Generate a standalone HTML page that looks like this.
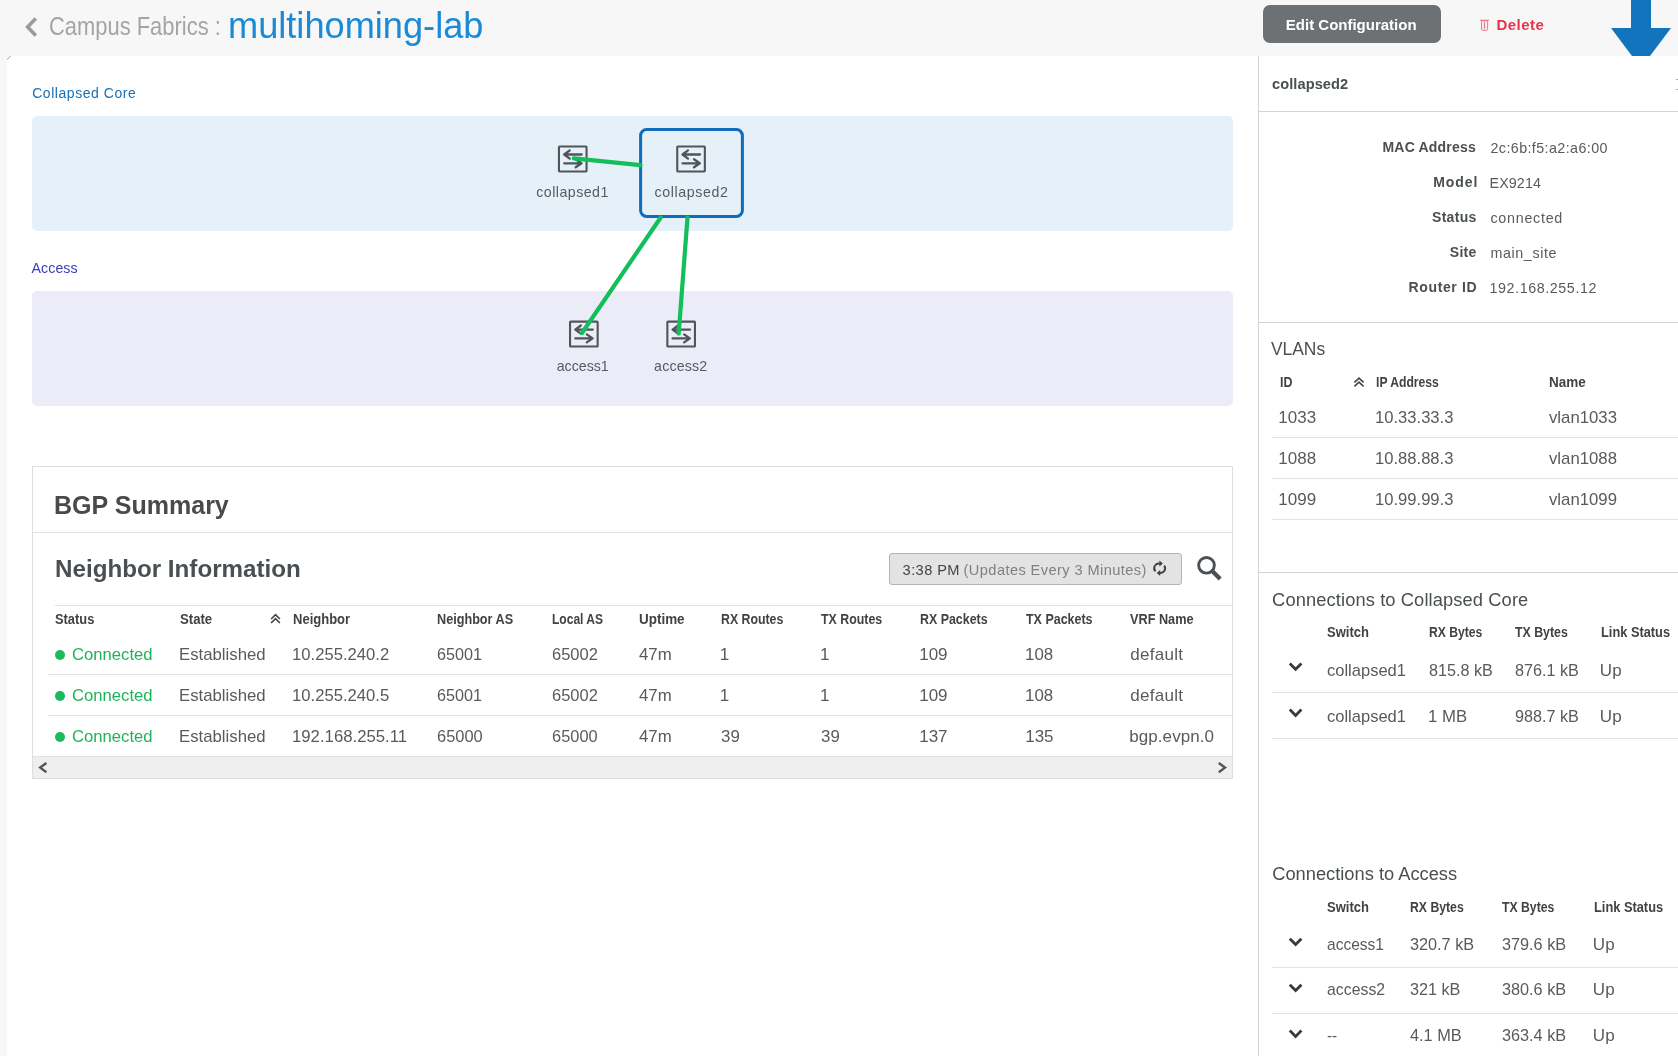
<!DOCTYPE html>
<html><head><meta charset="utf-8"><style>
html,body{margin:0;padding:0;}
body{width:1678px;height:1056px;overflow:hidden;background:#f7f7f7;position:relative;font-family:"Liberation Sans",sans-serif;}
.t{position:absolute;white-space:nowrap;line-height:1;transform-origin:0 0;}
.r{position:absolute;}
svg{position:absolute;overflow:visible;}
</style></head><body>
<!-- arrow (behind panel) -->
<svg style="left:0;top:0" width="1678" height="60"><polygon points="1631,0 1651,0 1651,28 1671,28 1641,68 1611,28 1631,28" fill="#1274bc"/></svg>
<!-- left panel -->
<div class="r" style="left:7px;top:56px;width:1251px;height:1000px;background:#fff;border-top-left-radius:4px;"></div>
<svg style="left:0;top:0" width="20" height="70"><path d="M7.5,59.8 A4,4 0 0 1 10.8,56.5" fill="none" stroke="#aaa" stroke-width="1"/></svg>
<!-- right panel -->
<div class="r" style="left:1258px;top:56px;width:420px;height:1000px;background:#fff;border-left:1px solid #d2d2d2;box-sizing:border-box;"></div>
<div class="r" style="left:1676px;top:79px;width:2px;height:1px;background:#aaa;"></div>
<div class="r" style="left:1676px;top:89px;width:2px;height:1px;background:#aaa;"></div>
<div class="r" style="left:1259px;top:111px;width:419px;height:1px;background:#d2d2d2;"></div>
<div class="r" style="left:1259px;top:322px;width:419px;height:1px;background:#d2d2d2;"></div>
<div class="r" style="left:1259px;top:572px;width:419px;height:1px;background:#d2d2d2;"></div>
<!-- header -->
<svg style="left:0;top:0" width="60" height="56"><polyline points="35.8,18.6 27.6,27 35.8,35.4" fill="none" stroke="#9b9b9b" stroke-width="3.6"/></svg>
<div class="r" style="left:1263px;top:5px;width:178px;height:38px;background:#6d7174;border-radius:7px;"></div>
<svg style="left:0;top:0" width="1678" height="56"><g fill="none" stroke="#ef7088"><path d="M1480,20.3 H1489" stroke-width="1.1"/><rect x="1481.5" y="20.9" width="6.1" height="9.4" rx="0.9" stroke-width="1"/><path d="M1484.5,22.4 V28.8" stroke-width="1.3"/></g></svg>
<!-- diagram boxes -->
<div class="r" style="left:32px;top:116px;width:1201px;height:115px;background:#e6f0f8;border-radius:5px;"></div>
<div class="r" style="left:32px;top:291px;width:1201px;height:115px;background:#ececf9;border-radius:5px;"></div>
<!-- switch icons -->
<svg style="left:0;top:0" width="1258" height="420">
 
 <g transform="translate(557.9,145.5)" fill="none" stroke="#505559" stroke-linecap="round" stroke-linejoin="round">
  <rect x="1.05" y="1.05" width="27.6" height="24.9" rx="0.6" stroke-width="2.1"/>
  <path d="M6.3,9.0 H23.8 M11.8,4.9 L6.3,9.0 L11.8,13.1" stroke-width="2.3"/>
  <path d="M6.3,17.8 H23.6 M17.8,13.8 L23.6,17.8 L17.8,21.8" stroke-width="2.3"/>
 </g>
 <g transform="translate(676.2,145.5)" fill="none" stroke="#505559" stroke-linecap="round" stroke-linejoin="round">
  <rect x="1.05" y="1.05" width="27.6" height="24.9" rx="0.6" stroke-width="2.1"/>
  <path d="M6.3,9.0 H23.8 M11.8,4.9 L6.3,9.0 L11.8,13.1" stroke-width="2.3"/>
  <path d="M6.3,17.8 H23.6 M17.8,13.8 L23.6,17.8 L17.8,21.8" stroke-width="2.3"/>
 </g>
 <g transform="translate(569,320.6)" fill="none" stroke="#505559" stroke-linecap="round" stroke-linejoin="round">
  <rect x="1.05" y="1.05" width="27.6" height="24.9" rx="0.6" stroke-width="2.1"/>
  <path d="M6.3,9.0 H23.8 M11.8,4.9 L6.3,9.0 L11.8,13.1" stroke-width="2.3"/>
  <path d="M6.3,17.8 H23.6 M17.8,13.8 L23.6,17.8 L17.8,21.8" stroke-width="2.3"/>
 </g>
 <g transform="translate(666.3,320.6)" fill="none" stroke="#505559" stroke-linecap="round" stroke-linejoin="round">
  <rect x="1.05" y="1.05" width="27.6" height="24.9" rx="0.6" stroke-width="2.1"/>
  <path d="M6.3,9.0 H23.8 M11.8,4.9 L6.3,9.0 L11.8,13.1" stroke-width="2.3"/>
  <path d="M6.3,17.8 H23.6 M17.8,13.8 L23.6,17.8 L17.8,21.8" stroke-width="2.3"/>
 </g>
 <rect x="640.6" y="129.6" width="101.8" height="86.8" rx="6" fill="none" stroke="#0f6cbb" stroke-width="3"/>
 <g stroke="#13bf5a" stroke-width="4.2" stroke-linecap="round" fill="none">
  <path d="M573.8,158.4 L640.5,165.2"/>
  <path d="M660.7,217.5 L582,333"/>
  <path d="M687.5,217.5 L678.7,333.5"/>
 </g>
</svg>
<!-- BGP card -->
<div class="r" style="left:32px;top:466px;width:1201px;height:313px;border:1px solid #dedede;box-sizing:border-box;background:#fff;"></div>
<div class="r" style="left:33px;top:532px;width:1199px;height:1px;background:#e2e0e2;"></div>
<div class="r" style="left:55px;top:605px;width:1177px;height:1px;background:#e2e0e2;"></div>
<div class="r" style="left:48px;top:674px;width:1184px;height:1px;background:#e2e2e2;"></div>
<div class="r" style="left:48px;top:715px;width:1184px;height:1px;background:#e2e2e2;"></div>
<div class="r" style="left:33px;top:756px;width:1199px;height:22px;background:#efefef;border-top:1px solid #e2e2e2;box-sizing:border-box;"></div>
<div class="r" style="left:889px;top:553px;width:293px;height:32px;background:#e3e3e3;border:1px solid #b5b5b5;border-radius:3px;box-sizing:border-box;"></div>
<svg style="left:0;top:0" width="1258" height="800">
 <g fill="#1db95a"><circle cx="60" cy="655" r="5"/><circle cx="60" cy="696" r="5"/><circle cx="60" cy="737" r="5"/></g>
 <g fill="none" stroke="#555" stroke-width="2.4"><polyline points="46.4,763 40.2,767.6 46.4,772.2"/><polyline points="1218.8,763 1225,767.6 1218.8,772.2"/></g>
 <g fill="none" stroke="#444" stroke-width="1.6"><polyline points="271.1,619 275.5,614.6 279.9,619"/><polyline points="271.1,623 275.5,618.6 279.9,623"/></g>
 <g fill="none" stroke="#4a5055"><circle cx="1206.5" cy="565.3" r="7.85" stroke-width="2.9"/><path d="M1211.2,570 L1220.2,579" stroke-width="4.2"/></g>
 <g fill="none" stroke="#404040" stroke-width="1.9"><path d="M1155.4,571.3 A4.6,4.6 0 0 1 1159.8,563.7"/><path d="M1164.2,565.6 A4.6,4.6 0 0 1 1159.8,572.9"/></g>
 <g fill="#404040"><polygon points="1162.9,563.6 1159.4,560.6 1159.4,566.6"/><polygon points="1156.7,572.9 1160.2,569.9 1160.2,575.9"/></g>
</svg>
<!-- right panel separators & icons -->
<div class="r" style="left:1272px;top:437px;width:406px;height:1px;background:#e2e2e2;"></div>
<div class="r" style="left:1272px;top:478px;width:406px;height:1px;background:#e2e2e2;"></div>
<div class="r" style="left:1272px;top:519px;width:406px;height:1px;background:#e2e2e2;"></div>
<div class="r" style="left:1272px;top:692px;width:406px;height:1px;background:#e2e2e2;"></div>
<div class="r" style="left:1272px;top:738px;width:406px;height:1px;background:#e2e2e2;"></div>
<div class="r" style="left:1272px;top:967px;width:406px;height:1px;background:#e2e2e2;"></div>
<div class="r" style="left:1272px;top:1013px;width:406px;height:1px;background:#e2e2e2;"></div>
<svg style="left:0;top:0" width="1678" height="1056">
 <g fill="none" stroke="#444" stroke-width="1.6"><polyline points="1354.4,382.3 1359,378.1 1363.6,382.3"/><polyline points="1354.4,386.3 1359,382.1 1363.6,386.3"/></g>
 <g fill="none" stroke="#393939" stroke-width="2.8">
  <polyline points="1289.8,663.5 1295.6,669.3 1301.4,663.5"/>
  <polyline points="1289.8,709.6 1295.6,715.4 1301.4,709.6"/>
  <polyline points="1289.8,938.8 1295.6,944.6 1301.4,938.8"/>
  <polyline points="1289.8,984.8 1295.6,990.6 1301.4,984.8"/>
  <polyline points="1289.8,1030.6 1295.6,1036.4 1301.4,1030.6"/>
 </g>
</svg>

<div style="position:absolute;left:0;top:0;width:1678px;height:1056px;will-change:transform;">
<div class="t" id="t0" style="left:48.92px;top:14.00px;font-size:25px;color:#a4a4a4;transform:scaleX(0.8770);">Campus Fabrics :</div>
<div class="t" id="t1" style="left:228.37px;top:7.02px;font-size:37.5px;color:#1a8ad6;transform:scaleX(0.9651);">multihoming-lab</div>
<div class="t" id="t2" style="left:1285.80px;top:17.00px;font-size:15px;color:#ffffff;font-weight:700;">Edit Configuration</div>
<div class="t" id="t3" style="left:1496.50px;top:17.00px;font-size:15px;color:#e5334b;font-weight:700;letter-spacing:0.464px;">Delete</div>
<div class="t" id="t4" style="left:32.20px;top:85.61px;font-size:14px;color:#1670b5;letter-spacing:0.545px;">Collapsed Core</div>
<div class="t" id="t5" style="left:31.60px;top:260.81px;font-size:14.2px;color:#3b3bbd;letter-spacing:0.053px;">Access</div>
<div class="t" id="t6" style="left:536.30px;top:184.70px;font-size:14.2px;color:#555b5f;letter-spacing:0.462px;">collapsed1</div>
<div class="t" id="t7" style="left:654.50px;top:184.70px;font-size:14.2px;color:#555b5f;letter-spacing:0.617px;">collapsed2</div>
<div class="t" id="t8" style="left:556.70px;top:359.31px;font-size:14.2px;color:#555b5f;">access1</div>
<div class="t" id="t9" style="left:654.10px;top:359.31px;font-size:14.2px;color:#555b5f;letter-spacing:0.174px;">access2</div>
<div class="t" id="t10" style="left:54.34px;top:492.01px;font-size:26.2px;color:#4a4a4a;font-weight:700;transform:scaleX(0.9556);">BGP Summary</div>
<div class="t" id="t11" style="left:55.00px;top:556.51px;font-size:24.2px;color:#4a4f52;font-weight:700;">Neighbor Information</div>
<div class="t" id="t12" style="left:902.60px;top:562.81px;font-size:14.6px;color:#454545;letter-spacing:0.418px;">3:38 PM</div>
<div class="t" id="t13" style="left:963.60px;top:562.81px;font-size:14.6px;color:#808080;letter-spacing:0.417px;">(Updates Every 3 Minutes)</div>
<div class="t" id="t14" style="left:55.00px;top:611.81px;font-size:14px;color:#3f4346;font-weight:700;transform:scaleX(0.9186);">Status</div>
<div class="t" id="t15" style="left:180.00px;top:611.81px;font-size:14px;color:#3f4346;font-weight:700;transform:scaleX(0.9405);">State</div>
<div class="t" id="t16" style="left:292.50px;top:611.81px;font-size:14px;color:#3f4346;font-weight:700;transform:scaleX(0.9291);">Neighbor</div>
<div class="t" id="t17" style="left:436.70px;top:611.81px;font-size:14px;color:#3f4346;font-weight:700;transform:scaleX(0.9036);">Neighbor AS</div>
<div class="t" id="t18" style="left:552.20px;top:611.81px;font-size:14px;color:#3f4346;font-weight:700;transform:scaleX(0.8596);">Local AS</div>
<div class="t" id="t19" style="left:639.00px;top:611.81px;font-size:14px;color:#3f4346;font-weight:700;transform:scaleX(0.9609);">Uptime</div>
<div class="t" id="t20" style="left:720.70px;top:611.81px;font-size:14px;color:#3f4346;font-weight:700;transform:scaleX(0.8803);">RX Routes</div>
<div class="t" id="t21" style="left:821.00px;top:611.81px;font-size:14px;color:#3f4346;font-weight:700;transform:scaleX(0.8842);">TX Routes</div>
<div class="t" id="t22" style="left:920.20px;top:611.81px;font-size:14px;color:#3f4346;font-weight:700;transform:scaleX(0.8865);">RX Packets</div>
<div class="t" id="t23" style="left:1026.20px;top:611.81px;font-size:14px;color:#3f4346;font-weight:700;transform:scaleX(0.8902);">TX Packets</div>
<div class="t" id="t24" style="left:1130.30px;top:611.81px;font-size:14px;color:#3f4346;font-weight:700;transform:scaleX(0.9070);">VRF Name</div>
<div class="t" id="t25" style="left:71.80px;top:645.81px;font-size:17px;color:#1fb35a;transform:scaleX(0.9795);">Connected</div>
<div class="t" id="t26" style="left:179.21px;top:645.81px;font-size:17px;color:#575b5e;transform:scaleX(0.9857);">Established</div>
<div class="t" id="t27" style="left:291.52px;top:645.81px;font-size:17px;color:#575b5e;transform:scaleX(0.9795);">10.255.240.2</div>
<div class="t" id="t28" style="left:436.70px;top:645.81px;font-size:17px;color:#575b5e;transform:scaleX(0.9526);">65001</div>
<div class="t" id="t29" style="left:552.20px;top:645.81px;font-size:17px;color:#575b5e;transform:scaleX(0.9697);">65002</div>
<div class="t" id="t30" style="left:639.00px;top:645.81px;font-size:17px;color:#575b5e;transform:scaleX(0.9876);">47m</div>
<div class="t" id="t31" style="left:719.70px;top:645.81px;font-size:17px;color:#575b5e;">1</div>
<div class="t" id="t32" style="left:820.00px;top:645.81px;font-size:17px;color:#575b5e;">1</div>
<div class="t" id="t33" style="left:919.20px;top:645.81px;font-size:17px;color:#575b5e;">109</div>
<div class="t" id="t34" style="left:1025.21px;top:645.81px;font-size:17px;color:#575b5e;transform:scaleX(0.9922);">108</div>
<div class="t" id="t35" style="left:1130.30px;top:645.81px;font-size:17px;color:#575b5e;letter-spacing:0.280px;">default</div>
<div class="t" id="t36" style="left:71.80px;top:686.81px;font-size:17px;color:#1fb35a;transform:scaleX(0.9795);">Connected</div>
<div class="t" id="t37" style="left:179.21px;top:686.81px;font-size:17px;color:#575b5e;transform:scaleX(0.9857);">Established</div>
<div class="t" id="t38" style="left:291.52px;top:686.81px;font-size:17px;color:#575b5e;transform:scaleX(0.9795);">10.255.240.5</div>
<div class="t" id="t39" style="left:436.70px;top:686.81px;font-size:17px;color:#575b5e;transform:scaleX(0.9526);">65001</div>
<div class="t" id="t40" style="left:552.20px;top:686.81px;font-size:17px;color:#575b5e;transform:scaleX(0.9697);">65002</div>
<div class="t" id="t41" style="left:639.00px;top:686.81px;font-size:17px;color:#575b5e;transform:scaleX(0.9876);">47m</div>
<div class="t" id="t42" style="left:719.70px;top:686.81px;font-size:17px;color:#575b5e;">1</div>
<div class="t" id="t43" style="left:820.00px;top:686.81px;font-size:17px;color:#575b5e;">1</div>
<div class="t" id="t44" style="left:919.20px;top:686.81px;font-size:17px;color:#575b5e;">109</div>
<div class="t" id="t45" style="left:1025.21px;top:686.81px;font-size:17px;color:#575b5e;transform:scaleX(0.9922);">108</div>
<div class="t" id="t46" style="left:1130.30px;top:686.81px;font-size:17px;color:#575b5e;letter-spacing:0.280px;">default</div>
<div class="t" id="t47" style="left:71.80px;top:727.81px;font-size:17px;color:#1fb35a;transform:scaleX(0.9795);">Connected</div>
<div class="t" id="t48" style="left:179.21px;top:727.81px;font-size:17px;color:#575b5e;transform:scaleX(0.9857);">Established</div>
<div class="t" id="t49" style="left:291.52px;top:727.81px;font-size:17px;color:#575b5e;transform:scaleX(0.9848);">192.168.255.11</div>
<div class="t" id="t50" style="left:436.70px;top:727.81px;font-size:17px;color:#575b5e;transform:scaleX(0.9654);">65000</div>
<div class="t" id="t51" style="left:552.20px;top:727.81px;font-size:17px;color:#575b5e;transform:scaleX(0.9654);">65000</div>
<div class="t" id="t52" style="left:639.00px;top:727.81px;font-size:17px;color:#575b5e;transform:scaleX(0.9876);">47m</div>
<div class="t" id="t53" style="left:720.70px;top:727.81px;font-size:17px;color:#575b5e;transform:scaleX(0.9916);">39</div>
<div class="t" id="t54" style="left:821.00px;top:727.81px;font-size:17px;color:#575b5e;transform:scaleX(0.9916);">39</div>
<div class="t" id="t55" style="left:919.20px;top:727.81px;font-size:17px;color:#575b5e;">137</div>
<div class="t" id="t56" style="left:1025.20px;top:727.81px;font-size:17px;color:#575b5e;">135</div>
<div class="t" id="t57" style="left:1129.30px;top:727.81px;font-size:17px;color:#575b5e;letter-spacing:0.058px;">bgp.evpn.0</div>
<div class="t" id="t58" style="left:1272.00px;top:76.60px;font-size:14.6px;color:#4a4f52;font-weight:700;letter-spacing:0.076px;">collapsed2</div>
<div class="t" id="t59" style="left:1382.50px;top:140.01px;font-size:14px;color:#4a4f52;font-weight:700;letter-spacing:0.199px;">MAC Address</div>
<div class="t" id="t60" style="left:1490.50px;top:140.90px;font-size:14.3px;color:#575b5e;letter-spacing:0.404px;">2c:6b:f5:a2:a6:00</div>
<div class="t" id="t61" style="left:1433.20px;top:175.01px;font-size:14px;color:#4a4f52;font-weight:700;letter-spacing:0.937px;">Model</div>
<div class="t" id="t62" style="left:1489.50px;top:175.90px;font-size:14.3px;color:#575b5e;letter-spacing:0.115px;">EX9214</div>
<div class="t" id="t63" style="left:1432.00px;top:210.01px;font-size:14px;color:#4a4f52;font-weight:700;letter-spacing:0.300px;">Status</div>
<div class="t" id="t64" style="left:1490.50px;top:210.90px;font-size:14.3px;color:#575b5e;letter-spacing:0.722px;">connected</div>
<div class="t" id="t65" style="left:1449.80px;top:245.01px;font-size:14px;color:#4a4f52;font-weight:700;letter-spacing:0.270px;">Site</div>
<div class="t" id="t66" style="left:1490.50px;top:245.91px;font-size:14.3px;color:#575b5e;letter-spacing:0.595px;">main_site</div>
<div class="t" id="t67" style="left:1408.50px;top:280.01px;font-size:14px;color:#4a4f52;font-weight:700;letter-spacing:0.639px;">Router ID</div>
<div class="t" id="t68" style="left:1489.50px;top:280.89px;font-size:14.3px;color:#575b5e;letter-spacing:0.582px;">192.168.255.12</div>
<div class="t" id="t69" style="left:1271.40px;top:339.72px;font-size:18.3px;color:#4a4f52;transform:scaleX(0.9514);">VLANs</div>
<div class="t" id="t70" style="left:1279.60px;top:374.70px;font-size:14px;color:#3f4346;font-weight:700;transform:scaleX(0.8856);">ID</div>
<div class="t" id="t71" style="left:1376.30px;top:374.70px;font-size:14px;color:#3f4346;font-weight:700;transform:scaleX(0.8684);">IP Address</div>
<div class="t" id="t72" style="left:1548.50px;top:374.70px;font-size:14px;color:#3f4346;font-weight:700;transform:scaleX(0.9649);">Name</div>
<div class="t" id="t73" style="left:1278.30px;top:408.81px;font-size:17px;color:#575b5e;">1033</div>
<div class="t" id="t74" style="left:1375.32px;top:408.81px;font-size:17px;color:#575b5e;transform:scaleX(0.9760);">10.33.33.3</div>
<div class="t" id="t75" style="left:1548.50px;top:408.81px;font-size:17px;color:#575b5e;transform:scaleX(0.9847);">vlan1033</div>
<div class="t" id="t76" style="left:1278.30px;top:449.81px;font-size:17px;color:#575b5e;">1088</div>
<div class="t" id="t77" style="left:1375.32px;top:449.81px;font-size:17px;color:#575b5e;transform:scaleX(0.9760);">10.88.88.3</div>
<div class="t" id="t78" style="left:1548.50px;top:449.81px;font-size:17px;color:#575b5e;transform:scaleX(0.9847);">vlan1088</div>
<div class="t" id="t79" style="left:1278.30px;top:490.81px;font-size:17px;color:#575b5e;">1099</div>
<div class="t" id="t80" style="left:1375.32px;top:490.81px;font-size:17px;color:#575b5e;transform:scaleX(0.9760);">10.99.99.3</div>
<div class="t" id="t81" style="left:1548.50px;top:490.81px;font-size:17px;color:#575b5e;transform:scaleX(0.9847);">vlan1099</div>
<div class="t" id="t82" style="left:1272.10px;top:590.79px;font-size:18.3px;color:#4a4f52;letter-spacing:0.112px;">Connections to Collapsed Core</div>
<div class="t" id="t83" style="left:1326.60px;top:624.70px;font-size:14px;color:#3f4346;font-weight:700;transform:scaleX(0.9290);">Switch</div>
<div class="t" id="t84" style="left:1428.50px;top:624.70px;font-size:14px;color:#3f4346;font-weight:700;transform:scaleX(0.8673);">RX Bytes</div>
<div class="t" id="t85" style="left:1515.10px;top:624.70px;font-size:14px;color:#3f4346;font-weight:700;transform:scaleX(0.8815);">TX Bytes</div>
<div class="t" id="t86" style="left:1600.80px;top:624.70px;font-size:14px;color:#3f4346;font-weight:700;transform:scaleX(0.9145);">Link Status</div>
<div class="t" id="t87" style="left:1326.80px;top:661.50px;font-size:17px;color:#575b5e;transform:scaleX(0.9712);">collapsed1</div>
<div class="t" id="t88" style="left:1428.50px;top:661.50px;font-size:17px;color:#575b5e;transform:scaleX(0.9511);">815.8 kB</div>
<div class="t" id="t89" style="left:1515.10px;top:661.50px;font-size:17px;color:#575b5e;transform:scaleX(0.9526);">876.1 kB</div>
<div class="t" id="t90" style="left:1599.80px;top:661.50px;font-size:17px;color:#575b5e;letter-spacing:0.123px;">Up</div>
<div class="t" id="t91" style="left:1326.80px;top:707.70px;font-size:17px;color:#575b5e;transform:scaleX(0.9712);">collapsed1</div>
<div class="t" id="t92" style="left:1427.51px;top:707.70px;font-size:17px;color:#575b5e;transform:scaleX(0.9859);">1 MB</div>
<div class="t" id="t93" style="left:1515.10px;top:707.70px;font-size:17px;color:#575b5e;transform:scaleX(0.9526);">988.7 kB</div>
<div class="t" id="t94" style="left:1599.80px;top:707.70px;font-size:17px;color:#575b5e;letter-spacing:0.123px;">Up</div>
<div class="t" id="t95" style="left:1272.20px;top:864.70px;font-size:18.3px;color:#4a4f52;">Connections to Access</div>
<div class="t" id="t96" style="left:1326.60px;top:899.61px;font-size:14px;color:#3f4346;font-weight:700;transform:scaleX(0.9290);">Switch</div>
<div class="t" id="t97" style="left:1409.90px;top:899.61px;font-size:14px;color:#3f4346;font-weight:700;transform:scaleX(0.8738);">RX Bytes</div>
<div class="t" id="t98" style="left:1502.40px;top:899.61px;font-size:14px;color:#3f4346;font-weight:700;transform:scaleX(0.8732);">TX Bytes</div>
<div class="t" id="t99" style="left:1593.80px;top:899.61px;font-size:14px;color:#3f4346;font-weight:700;transform:scaleX(0.9158);">Link Status</div>
<div class="t" id="t100" style="left:1326.80px;top:935.61px;font-size:17px;color:#575b5e;transform:scaleX(0.9142);">access1</div>
<div class="t" id="t101" style="left:1409.90px;top:935.61px;font-size:17px;color:#575b5e;transform:scaleX(0.9556);">320.7 kB</div>
<div class="t" id="t102" style="left:1502.40px;top:935.61px;font-size:17px;color:#575b5e;transform:scaleX(0.9556);">379.6 kB</div>
<div class="t" id="t103" style="left:1592.80px;top:935.61px;font-size:17px;color:#575b5e;letter-spacing:0.123px;">Up</div>
<div class="t" id="t104" style="left:1326.80px;top:981.36px;font-size:17px;color:#575b5e;transform:scaleX(0.9320);">access2</div>
<div class="t" id="t105" style="left:1409.90px;top:981.36px;font-size:17px;color:#575b5e;transform:scaleX(0.9527);">321 kB</div>
<div class="t" id="t106" style="left:1502.40px;top:981.36px;font-size:17px;color:#575b5e;transform:scaleX(0.9556);">380.6 kB</div>
<div class="t" id="t107" style="left:1592.80px;top:981.36px;font-size:17px;color:#575b5e;letter-spacing:0.123px;">Up</div>
<div class="t" id="t108" style="left:1326.80px;top:1027.11px;font-size:17px;color:#575b5e;transform:scaleX(0.9005);">--</div>
<div class="t" id="t109" style="left:1409.90px;top:1027.11px;font-size:17px;color:#575b5e;transform:scaleX(0.9604);">4.1 MB</div>
<div class="t" id="t110" style="left:1502.40px;top:1027.11px;font-size:17px;color:#575b5e;transform:scaleX(0.9556);">363.4 kB</div>
<div class="t" id="t111" style="left:1592.80px;top:1027.11px;font-size:17px;color:#575b5e;letter-spacing:0.123px;">Up</div>
</div>
</body></html>
